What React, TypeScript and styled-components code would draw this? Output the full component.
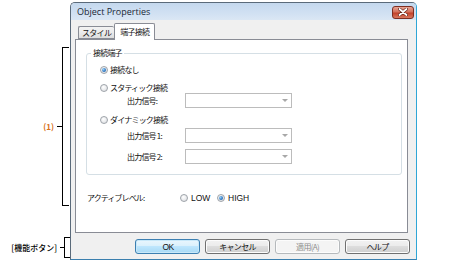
import { FC, ReactNode } from "react";
import styled, { createGlobalStyle } from "styled-components";

const GlobalStyle = createGlobalStyle`
  html, body {
    margin: 0;
    padding: 0;
    background: #ffffff;
  }
`;

const JP = `"Noto Sans CJK JP", "Liberation Sans", sans-serif`;

const Canvas = styled("div")`
  display: flex;
  width: 473px;
  height: 264px;
  background: #ffffff;
  font-family: ${JP};
  color: #111111;
  overflow: hidden;
`;

const Callouts = styled("div")`
  display: flex;
  flex-direction: column;
  width: 70px;
  padding-top: 47px;
  box-sizing: border-box;
`;

const CalloutRow = styled("div")<{ $h: number; $mt: number; $mr: number }>`
  display: flex;
  align-items: center;
  justify-content: flex-end;
  height: ${(p) => p.$h}px;
  margin-top: ${(p) => p.$mt}px;
  margin-right: ${(p) => p.$mr}px;
`;

const CalloutLabel = styled("span")<{ $color: string; $bold?: boolean }>`
  font-size: 8px;
  line-height: 10px;
  color: ${(p) => p.$color};
  margin-right: 3px;
  white-space: nowrap;
  font-weight: ${(p) => (p.$bold ? 700 : 500)};
`;

const Tick = styled("div")<{ $w: number }>`
  width: ${(p) => p.$w}px;
  height: 1px;
  background: #000;
`;

const Bracket = styled("div")<{ $w: number }>`
  align-self: stretch;
  width: ${(p) => p.$w}px;
  border: 1px solid #000;
  border-right: none;
`;

const Window = styled("div")`
  display: flex;
  flex-direction: column;
  width: 347px;
  height: 258px;
  margin-top: 2px;
  box-sizing: border-box;
  border: 1px solid #5a6a7a;
  border-right-color: #2fa6d6;
  border-bottom-color: #3a7fae;
  border-radius: 5px 5px 0 0;
  background: #f0f0f0;
  overflow: hidden;
`;

const TitleBar = styled("div")`
  display: flex;
  align-items: center;
  justify-content: space-between;
  height: 17px;
  padding: 0 2px 0 6px;
  background: linear-gradient(#c4d8ee, #d3e2f3 70%, #dbe7f4);
  flex-shrink: 0;
`;

const Title = styled("span")`
  font-family: "Open Sans", "Noto Sans", sans-serif;
  font-size: 9px;
  line-height: 12px;
  color: #1b2836;
`;

const CloseButton = styled("div")`
  display: flex;
  align-items: center;
  justify-content: center;
  width: 22px;
  height: 13px;
  box-sizing: border-box;
  margin-top: 1px;
  border: 1px solid #7d2e22;
  border-radius: 3px;
  background: linear-gradient(#e8a493, #d3705c 45%, #c2412a 55%, #d8775f);
`;

const Body = styled("div")`
  display: flex;
  flex-direction: column;
  flex: 1;
  padding: 0 6px 0 4px;
  background: #f0f0f0;
`;

const TabStrip = styled("div")`
  display: flex;
  align-items: flex-end;
  height: 19px;
  padding-left: 3px;
  position: relative;
  z-index: 1;
`;

const Tab = styled("div")<{ $active?: boolean }>`
  display: flex;
  align-items: center;
  justify-content: center;
  box-sizing: border-box;
  height: ${(p) => (p.$active ? 17 : 13)}px;
  padding: 0 ${(p) => (p.$active ? 5 : 3)}px;
  margin-bottom: ${(p) => (p.$active ? -1 : 0)}px;
  border: 1px solid #898c95;
  border-bottom: ${(p) => (p.$active ? "none" : "1px solid #898c95")};
  border-right: ${(p) => (p.$active ? "1px solid #898c95" : "none")};
  border-radius: 2px 2px 0 0;
  background: ${(p) =>
    p.$active ? "#ffffff" : "linear-gradient(#f3f3f3, #ebebeb 50%, #dddddd)"};
  font-size: 8px;
  letter-spacing: -0.7px;
  line-height: 10px;
`;

const TabPanel = styled("div")`
  display: flex;
  flex-direction: column;
  height: 194px;
  margin-right: 2px;
  box-sizing: border-box;
  border: 1px solid #898c95;
  background: #ffffff;
  padding: 13px 5px 0 10px;
`;

const Group = styled("div")`
  position: relative;
  display: flex;
  flex-direction: column;
  height: 122px;
  box-sizing: border-box;
  border: 1px solid #d5dfe5;
  border-radius: 3px;
  padding-top: 10px;
`;

const GroupTitle = styled("span")`
  position: absolute;
  top: -6px;
  left: 4px;
  padding: 0 2px;
  background: #ffffff;
  font-size: 8px;
  letter-spacing: -0.8px;
  line-height: 10px;
`;

const OptionRow = styled("div")<{ $mt: number }>`
  display: flex;
  align-items: center;
  height: 12px;
  margin-top: ${(p) => p.$mt}px;
  padding-left: 13px;
`;

const Radio = styled("span")<{ $on?: boolean }>`
  display: inline-flex;
  align-items: center;
  justify-content: center;
  width: 8px;
  height: 8px;
  box-sizing: border-box;
  border-radius: 50%;
  border: 1px solid #9ea3a9;
  background: radial-gradient(circle at 40% 35%, #ffffff, #e3e5e8 70%, #d0d3d7);
  margin-right: 2px;
  flex-shrink: 0;
  &::after {
    content: "";
    display: ${(p) => (p.$on ? "block" : "none")};
    width: 4px;
    height: 4px;
    border-radius: 50%;
    background: radial-gradient(circle at 35% 35%, #9ad0f5, #2f78c4 60%, #1c4f8a);
  }
`;

const OptionText = styled("span")`
  font-size: 8px;
  letter-spacing: -0.8px;
  line-height: 10px;
  white-space: nowrap;
`;

const FieldRow = styled("div")<{ $mt: number }>`
  display: flex;
  align-items: center;
  height: 15px;
  margin-top: ${(p) => p.$mt}px;
  padding-left: 40px;
`;

const FieldLabel = styled("span")`
  width: 58px;
  font-size: 8px;
  letter-spacing: -0.8px;
  line-height: 10px;
  white-space: nowrap;
`;

const Combo = styled("div")`
  display: flex;
  align-items: center;
  justify-content: flex-end;
  width: 107px;
  height: 15px;
  box-sizing: border-box;
  border: 1px solid #bcbcbc;
  background: #ffffff;
  padding-right: 3px;
  &::after {
    content: "";
    width: 0;
    height: 0;
    border-left: 3px solid transparent;
    border-right: 3px solid transparent;
    border-top: 3px solid #a8a8a8;
  }
`;

const LevelRow = styled("div")`
  display: flex;
  align-items: center;
  height: 12px;
  margin-top: 17px;
  padding-left: 1px;
`;

const LevelLabel = styled("span")`
  width: 93px;
  font-size: 8px;
  letter-spacing: -0.9px;
  line-height: 10px;
  white-space: nowrap;
`;

const LevelOption = styled("div")<{ $w: number }>`
  display: flex;
  align-items: center;
  width: ${(p) => p.$w}px;
`;

const LatinText = styled("span")`
  font-family: "Liberation Sans", Arial, sans-serif;
  font-size: 8.5px;
  line-height: 10px;
  margin-left: 1px;
`;

const ButtonBar = styled("div")`
  display: flex;
  justify-content: flex-end;
  gap: 5px;
  margin-top: 6px;
`;

const Button = styled("div")<{ $variant?: "default" | "disabled" }>`
  display: flex;
  align-items: center;
  justify-content: center;
  width: 65px;
  height: 15px;
  box-sizing: border-box;
  border-radius: 3px;
  border: 1px solid
    ${(p) =>
      p.$variant === "default"
        ? "#3c7fb1"
        : p.$variant === "disabled"
        ? "#b5b9bc"
        : "#707070"};
  background: ${(p) =>
    p.$variant === "default"
      ? "linear-gradient(#eaf6fd, #d9f0fc 50%, #bee6fd 50%, #a7d9f5)"
      : p.$variant === "disabled"
      ? "#f4f4f4"
      : "linear-gradient(#f2f2f2, #ebebeb 50%, #dddddd 50%, #cfcfcf)"};
  box-shadow: ${(p) =>
    p.$variant === "default" ? "inset 0 0 0 1px #c8e8f9" : "inset 0 0 0 1px #fcfcfc"};
  color: ${(p) => (p.$variant === "disabled" ? "#8d8d8d" : "#111111")};
  font-size: 8px;
  letter-spacing: -0.7px;
  line-height: 10px;
`;

const CloseGlyph: FC = () => (
  <svg width="10" height="8" viewBox="0 0 10 8">
    <path d="M1.5 1 L8.5 7 M8.5 1 L1.5 7" stroke="#5a1a10" strokeWidth="3" strokeLinecap="round" />
    <path d="M1.5 1 L8.5 7 M8.5 1 L1.5 7" stroke="#ffffff" strokeWidth="1.8" strokeLinecap="round" />
  </svg>
);

const Callout: FC<{
  h: number;
  mt: number;
  mr: number;
  tick: number;
  bw: number;
  color: string;
  bold?: boolean;
  children: ReactNode;
}> = ({ h, mt, mr, tick, bw, color, bold, children }) => (
  <CalloutRow $h={h} $mt={mt} $mr={mr}>
    <CalloutLabel $color={color} $bold={bold}>
      {children}
    </CalloutLabel>
    <Tick $w={tick} />
    <Bracket $w={bw} />
  </CalloutRow>
);

export default function App() {
  return (
    <>
      <GlobalStyle />
      <Canvas>
        <Callouts>
          <Callout h={159} mt={0} mr={1} tick={5} bw={6} color="#d9701a" bold>
            (1)
          </Callout>
          <Callout h={21} mt={31} mr={0} tick={4} bw={5} color="#000">
            [機能ボタン]
          </Callout>
        </Callouts>

        <Window>
          <TitleBar>
            <Title>Object Properties</Title>
            <CloseButton>
              <CloseGlyph />
            </CloseButton>
          </TitleBar>

          <Body>
            <TabStrip>
              <Tab>スタイル</Tab>
              <Tab $active>端子接続</Tab>
            </TabStrip>

            <TabPanel>
              <Group>
                <GroupTitle>接続端子</GroupTitle>
                <OptionRow $mt={0}>
                  <Radio $on />
                  <OptionText>接続なし</OptionText>
                </OptionRow>
                <OptionRow $mt={6}>
                  <Radio />
                  <OptionText>スタティック接続</OptionText>
                </OptionRow>
                <FieldRow $mt={-1}>
                  <FieldLabel>出力信号:</FieldLabel>
                  <Combo />
                </FieldRow>
                <OptionRow $mt={6}>
                  <Radio />
                  <OptionText>ダイナミック接続</OptionText>
                </OptionRow>
                <FieldRow $mt={2}>
                  <FieldLabel>出力信号 1:</FieldLabel>
                  <Combo />
                </FieldRow>
                <FieldRow $mt={6}>
                  <FieldLabel>出力信号 2:</FieldLabel>
                  <Combo />
                </FieldRow>
              </Group>

              <LevelRow>
                <LevelLabel>アクティブレベル:</LevelLabel>
                <LevelOption $w={37}>
                  <Radio />
                  <LatinText>LOW</LatinText>
                </LevelOption>
                <LevelOption $w={40}>
                  <Radio $on />
                  <LatinText>HIGH</LatinText>
                </LevelOption>
              </LevelRow>
            </TabPanel>

            <ButtonBar>
              <Button $variant="default">
                <LatinText>OK</LatinText>
              </Button>
              <Button>キャンセル</Button>
              <Button $variant="disabled">適用(A)</Button>
              <Button>ヘルプ</Button>
            </ButtonBar>
          </Body>
        </Window>
      </Canvas>
    </>
  );
}
